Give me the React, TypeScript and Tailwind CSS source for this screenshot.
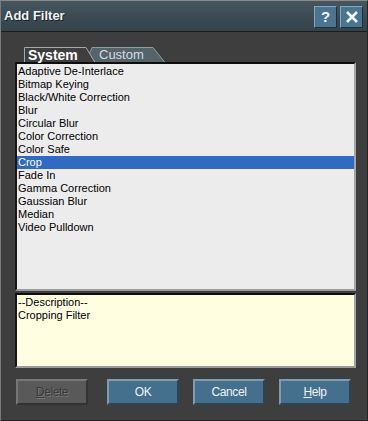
import { type ReactNode } from "react";

const FILTERS = [
  "Adaptive De-Interlace",
  "Bitmap Keying",
  "Black/White Correction",
  "Blur",
  "Circular Blur",
  "Color Correction",
  "Color Safe",
  "Crop",
  "Fade In",
  "Gamma Correction",
  "Gaussian Blur",
  "Median",
  "Video Pulldown",
];

const SELECTED = "Crop";

export default function App() {
  return (
    <div className="flex h-[421px] w-[368px] flex-col border border-t-[#8a8a8a] border-l-[#7a7a7a] border-r-[#262626] border-b-[#262626] bg-[#3e3e3e] font-['Liberation_Sans',Arial,sans-serif]">
      <TitleBar />

      <div className="flex flex-1 flex-col pl-[14px] pr-[11px]">
        <Tabs />

        <div className="h-[229px] overflow-hidden border-2 border-t-[#0e0e0e] border-l-[#161616] border-r-[#a4a4a4] border-b-[#9c9c9c] bg-[#ececec] pt-[1px]">
          {FILTERS.map((name) => (
            <div
              key={name}
              className={
                name === SELECTED
                  ? "h-[13px] bg-[#316ac5] pl-[1px] text-[11px] leading-[13px] text-white"
                  : "h-[13px] pl-[1px] text-[11px] leading-[13px] text-black"
              }
            >
              {name}
            </div>
          ))}
        </div>

        <div className="mt-[2px] h-[75px] border-2 border-t-[#0e0e0e] border-l-[#161616] border-r-[#a4a4a4] border-b-[#9c9c9c] bg-[#fffee1] pt-[1px] pl-[1px] text-[11px] leading-[13px] text-black">
          <div>--Description--</div>
          <div>Cropping Filter</div>
        </div>

        <div className="mt-[11px] flex items-center pl-[1px]">
          <DialogButton disabled>
            <span className="underline underline-offset-1">D</span>elete
          </DialogButton>
          <div className="ml-[19px]">
            <DialogButton>OK</DialogButton>
          </div>
          <div className="ml-[14px]">
            <DialogButton>Cancel</DialogButton>
          </div>
          <div className="ml-[14px]">
            <DialogButton>
              <span className="underline underline-offset-1">H</span>elp
            </DialogButton>
          </div>
        </div>
      </div>
    </div>
  );
}

function TitleBar() {
  return (
    <div className="flex h-[31px] items-center justify-between border-b border-b-[#1c1c1c] bg-gradient-to-b from-[#46565f] to-[#34424a] pl-[3px] pr-[4px]">
      <span className="text-[13px] font-bold text-[#eef2f4] [text-shadow:1px_1px_0_#1a1f22]">
        Add Filter
      </span>
      <div className="flex gap-[3px] pt-[1px]">
        <CaptionButton>?</CaptionButton>
        <CaptionButton>
          <svg width="14" height="14" viewBox="0 0 14 14">
            <path d="M2 2 L12 12 M12 2 L2 12" stroke="#f4f8fa" strokeWidth="2.6" />
          </svg>
        </CaptionButton>
      </div>
    </div>
  );
}

function CaptionButton({ children }: { children: ReactNode }) {
  return (
    <div className="flex h-[22px] w-[23px] items-center justify-center border border-t-[#86a6ba] border-l-[#86a6ba] border-r-[#1f2f3a] border-b-[#1f2f3a] bg-[#4a7591] text-[15px] font-bold leading-none text-[#f4f8fa]">
      {children}
    </div>
  );
}

function Tabs() {
  return (
    <div className="relative mt-[14px] ml-[9px] h-[16px] w-[150px]">
      <svg className="absolute inset-0" width="150" height="16" viewBox="0 0 150 16">
        <polygon points="62,16.5 68,1.5 129,1.5 141,16.5" fill="#55636b" stroke="#8d9ca4" strokeWidth="1" />
        <polygon points="0.5,16.5 0.5,1.5 62,1.5 71,16.5" fill="#3e3e3e" stroke="#a8a8a8" strokeWidth="1" />
      </svg>
      <span className="absolute left-[4px] top-[1px] text-[14px] font-bold leading-[16px] text-white">
        System
      </span>
      <span className="absolute left-[75px] top-[1px] text-[13px] leading-[16px] text-[#d4dce0]">
        Custom
      </span>
    </div>
  );
}

function DialogButton({ children, disabled }: { children: ReactNode; disabled?: boolean }) {
  return (
    <div
      className={
        disabled
          ? "flex h-[26px] w-[72px] items-center justify-center border-2 border-t-[#787878] border-l-[#787878] border-r-[#333333] border-b-[#333333] bg-[#595959] text-[12px] tracking-[-0.4px] text-[#3a3a3a] [text-shadow:1px_1px_0_#777777]"
          : "flex h-[26px] w-[72px] items-center justify-center border-2 border-t-[#7f9db1] border-l-[#7f9db1] border-r-[#2c4556] border-b-[#2c4556] bg-[#44708e] text-[12px] tracking-[-0.4px] text-[#eef3f6]"
      }
    >
      <span>{children}</span>
    </div>
  );
}
